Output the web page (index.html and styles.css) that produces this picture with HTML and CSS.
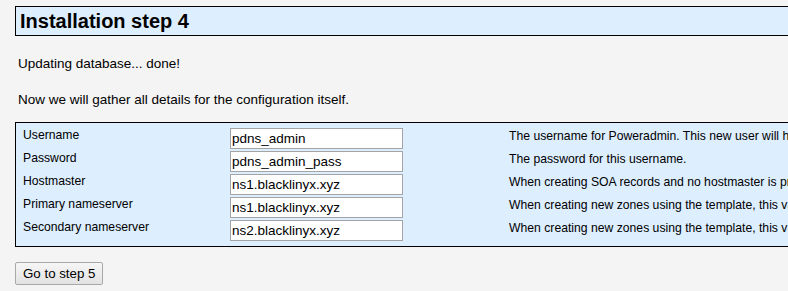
FILE: index.html
```html
<!DOCTYPE html>
<html lang="en">
<head>
  <meta charset="UTF-8" />
  <title>Poweradmin Installation</title>
  <link rel="stylesheet" href="styles.css">
</head>
<body>
  <div class="page">
    <h1>Installation step 4</h1>
    <p>Updating database... done!</p>
    <p>Now we will gather all details for the configuration itself.</p>
    <form>
      <table class="config">
        <tr>
          <td class="label">Username</td>
          <td class="field"><input type="text" value="pdns_admin" /></td>
          <td class="desc">The username for Poweradmin. This new user will have limited rights only.</td>
        </tr>
        <tr>
          <td class="label">Password</td>
          <td class="field"><input type="text" value="pdns_admin_pass" /></td>
          <td class="desc">The password for this username.</td>
        </tr>
        <tr>
          <td class="label">Hostmaster</td>
          <td class="field"><input type="text" value="ns1.blacklinyx.xyz" /></td>
          <td class="desc">When creating SOA records and no hostmaster is provided, this value here will be used.</td>
        </tr>
        <tr>
          <td class="label">Primary nameserver</td>
          <td class="field"><input type="text" value="ns1.blacklinyx.xyz" /></td>
          <td class="desc">When creating new zones using the template, this value will be used as primary nameserver.</td>
        </tr>
        <tr>
          <td class="label">Secondary nameserver</td>
          <td class="field"><input type="text" value="ns2.blacklinyx.xyz" /></td>
          <td class="desc">When creating new zones using the template, this value will be used as secondary nameserver.</td>
        </tr>
      </table>
      <input type="button" class="button" value="Go to step 5" />
    </form>
  </div>
</body>
</html>
```

FILE: styles.css
```css
html {
  overflow: hidden;
}
body {
  margin: 0;
  background-color: #f4f4f4;
  color: #000;
  font-family: "Liberation Sans", Arial, sans-serif;
  font-size: 13.5px;
}
.page {
  width: 1400px;
  padding: 6px 15px;
}
h1 {
  margin: 0;
  padding: 2px 4px 1px;
  font-size: 20px;
  line-height: 25px;
  background-color: #ddeeff;
  border: 1px solid #000;
}
p {
  margin: 20px 3px 0;
  line-height: 15px;
}
p + p {
  margin-top: 21px;
}
.config {
  margin-top: 15px;
  width: 1200px;
  border: 1px solid #000;
  border-collapse: collapse;
  background-color: #ddeeff;
}
.config td {
  padding: 0;
  vertical-align: top;
  white-space: nowrap;
  font-size: 12.2px;
  line-height: 14px;
}
.config tr:first-child td {
  padding-top: 4px;
}
.config tr:last-child td {
  padding-bottom: 4px;
}
.config td.label {
  width: 207px;
  padding-left: 7px;
  padding-top: 1px;
}
.config tr:first-child td.label {
  padding-top: 5px;
}
.config td.field {
  width: 279px;
}
.config td.desc {
  padding-top: 2px;
}
.config tr:first-child td.desc {
  padding-top: 6px;
}
.field input {
  display: block;
  box-sizing: border-box;
  width: 173px;
  height: 21px;
  margin: 1px 0;
  padding: 0 1px;
  border: 1px solid #a4a4a4;
  background: #fff;
  font-family: "Liberation Sans", Arial, sans-serif;
  font-size: 13.5px;
  color: #000;
}
.button {
  margin-top: 15px;
  height: 23px;
  padding: 0 7px;
  font-family: "Liberation Sans", Arial, sans-serif;
  font-size: 13.3px;
  color: #000;
  background: linear-gradient(#f6f6f6, #e2e2e2);
  border: 1px solid #a8a8a8;
  border-radius: 2px;
}
```
